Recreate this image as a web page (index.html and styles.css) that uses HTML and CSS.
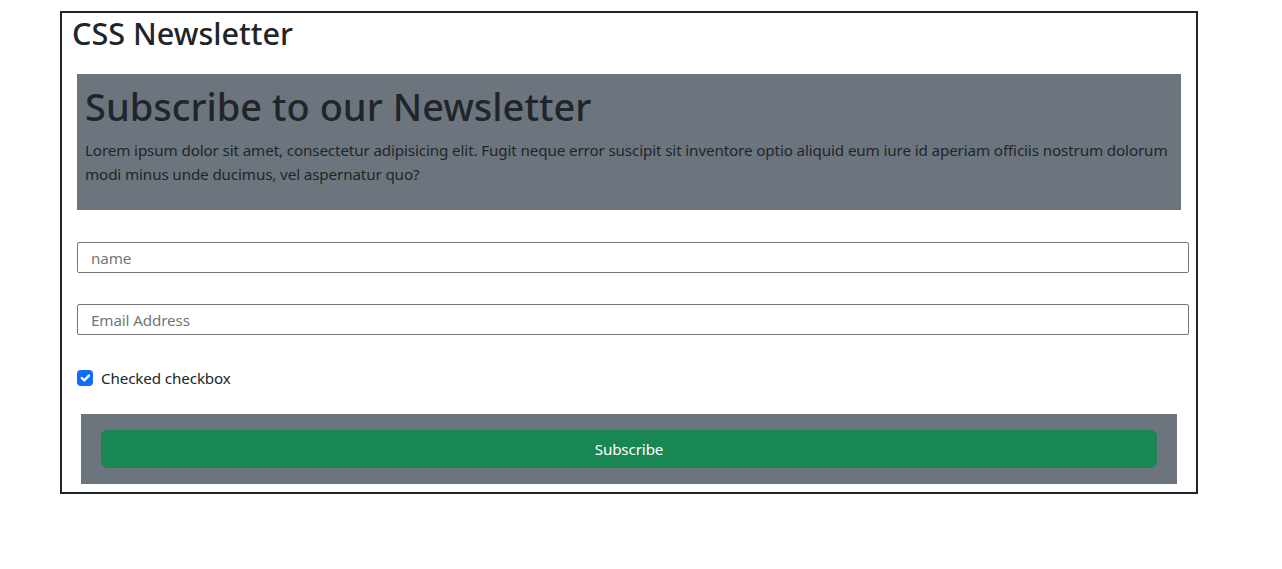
FILE: index.html
```html
<!DOCTYPE html>
<html lang="en">
<head>
<meta charset="utf-8">
<title>CSS Newsletter</title>
<link rel="stylesheet" href="styles.css">
</head>
<body>
<div class="container">
  <h2 class="title">CSS Newsletter</h2>
  <div class="hero">
    <h1 class="hero-title">Subscribe to our Newsletter</h1>
    <p class="hero-text">Lorem ipsum dolor sit amet, consectetur adipisicing elit. Fugit neque error suscipit sit inventore optio aliquid eum iure id aperiam officiis nostrum dolorum modi minus unde ducimus, vel aspernatur quo?</p>
  </div>
  <form class="form">
    <input class="field" type="text" placeholder="name">
    <input class="field" type="email" placeholder="Email Address">
    <label class="check">
      <span class="check-box">
        <svg viewBox="0 0 20 20" width="16" height="16"><path d="M6 10l3 3 6-6" fill="none" stroke="#fff" stroke-width="3" stroke-linecap="round" stroke-linejoin="round"/></svg>
      </span>
      <span class="check-label">Checked checkbox</span>
    </label>
    <div class="actions">
      <button class="btn" type="button">Subscribe</button>
    </div>
  </form>
</div>
</body>
</html>
```

FILE: styles.css
```css
* { box-sizing: border-box; }
html, body { margin: 0; padding: 0; background: #fff; }
body {
  font-family: "Noto Sans", "Liberation Sans", sans-serif;
  font-size: 15.2px;
  line-height: 24px;
  letter-spacing: -0.008em;
  color: #212529;
}
.container {
  margin: 11px 0 0 60px;
  width: 1138px;
  border: 2px solid #212529;
  padding: 0 12px 8px 10px;
}
.title {
  margin: 0 0 22px 0;
  padding: 1px 0 0 0;
  font-size: 30.6px;
  font-weight: 500;
  line-height: 38.4px;
  letter-spacing: 0;
}
.hero {
  margin-left: 5px;
  width: 1104px;
  background: #6c757d;
  padding: 8px;
}
.hero-title {
  margin: 0 0 8px 0;
  font-size: 38px;
  font-weight: 500;
  line-height: 48px;
  letter-spacing: 0;
}
.hero-text {
  margin: 0 0 16px 0;
}
.form {
  display: flex;
  flex-direction: column;
  align-items: flex-start;
  padding-top: 32px;
  margin-left: 5px;
}
.field {
  width: 1112px;
  height: 31px;
  border: 1px solid #767676;
  border-radius: 2px;
  padding: 0 13px;
  font-family: inherit;
  font-size: 15.2px;
  letter-spacing: inherit;
  color: #212529;
  margin-bottom: 31px;
  outline: none;
}
.field::placeholder { color: #757575; }
.check {
  display: flex;
  align-items: center;
  gap: 8px;
  height: 24px;
  margin-bottom: 24px;
}
.check-box {
  width: 16px;
  height: 16px;
  border-radius: 4px;
  background: #0d6efd;
  display: flex;
  align-items: center;
  justify-content: center;
}
.check-box svg { width: 16px; height: 16px; display: block; }
.actions {
  margin-left: 4px;
  width: 1096px;
  background: #6c757d;
  padding: 16px 20px 16px 20px;
}
.btn {
  display: block;
  width: 100%;
  height: 38px;
  border: 1px solid #198754;
  border-radius: 6px;
  background: #198754;
  color: #fff;
  font-family: inherit;
  font-size: 15.2px;
  letter-spacing: inherit;
  line-height: 24px;
  padding: 6px 12px;
}
```
